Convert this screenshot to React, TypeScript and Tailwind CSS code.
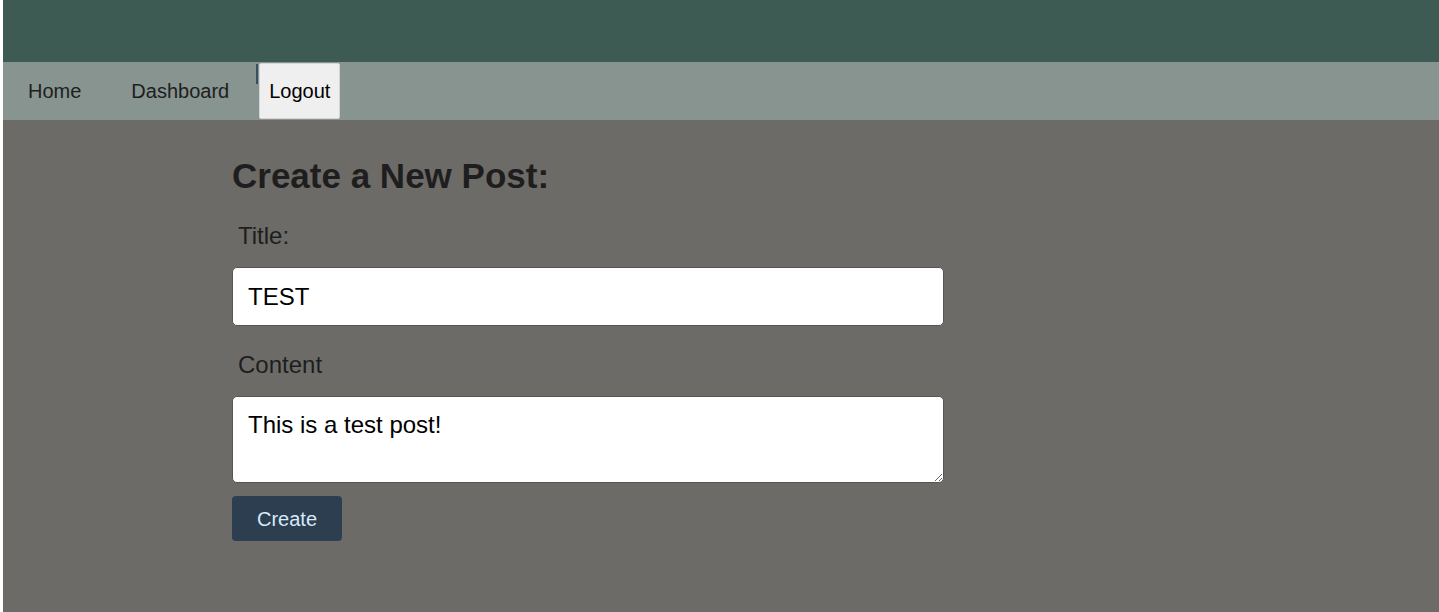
export default function App() {
  return (
    <div
      className="min-h-[612px] bg-white pl-[3px]"
      style={{ fontFamily: '"Liberation Sans", Arial, sans-serif' }}
    >
      <header className="h-[62px] bg-[#3d5a53]" />
      <nav className="flex h-[58px] items-stretch bg-[#879490] text-[20px] text-[#1e1e1e]">
        <a className="flex items-center pl-[25px] pr-[25px]">Home</a>
        <a className="flex items-center pl-[25px] pr-[27px]">Dashboard</a>
        <span className="mt-[2px] h-[20px] w-[2px] bg-[#3a5060]" />
        <button className="mb-px ml-[1px] mt-px flex items-center rounded-[2px] border border-[#d4d4d4] bg-[#efefef] px-[9px] text-[20px] text-black">
          Logout
        </button>
      </nav>
      <main className="min-h-[492px] bg-[#6d6b67] pl-[229px] pt-[36px]">
        <form className="flex w-[712px] flex-col text-[#1e1e1e]">
          <h2 className="text-[35px] font-bold leading-[40px]">Create a New Post:</h2>
          <label className="mt-[26px] pl-[6px] text-[24px] leading-[28px]">Title:</label>
          <input
            defaultValue="TEST"
            className="mt-[17px] h-[59px] rounded-[5px] border border-[#555] bg-white px-[15px] text-[24px] text-black outline-none"
          />
          <label className="mt-[25px] pl-[6px] text-[24px] leading-[28px]">Content</label>
          <textarea
            defaultValue="This is a test post!"
            className="mt-[17px] h-[87px] rounded-[5px] border border-[#555] bg-white px-[15px] pt-[14px] text-[24px] leading-[28px] text-black outline-none"
          />
          <div className="mt-[13px]">
            <button
              type="button"
              className="h-[45px] w-[110px] rounded-[4px] bg-[#2c3e50] text-[20px] text-[#d6eaf8]"
            >
              Create
            </button>
          </div>
        </form>
      </main>
    </div>
  );
}
